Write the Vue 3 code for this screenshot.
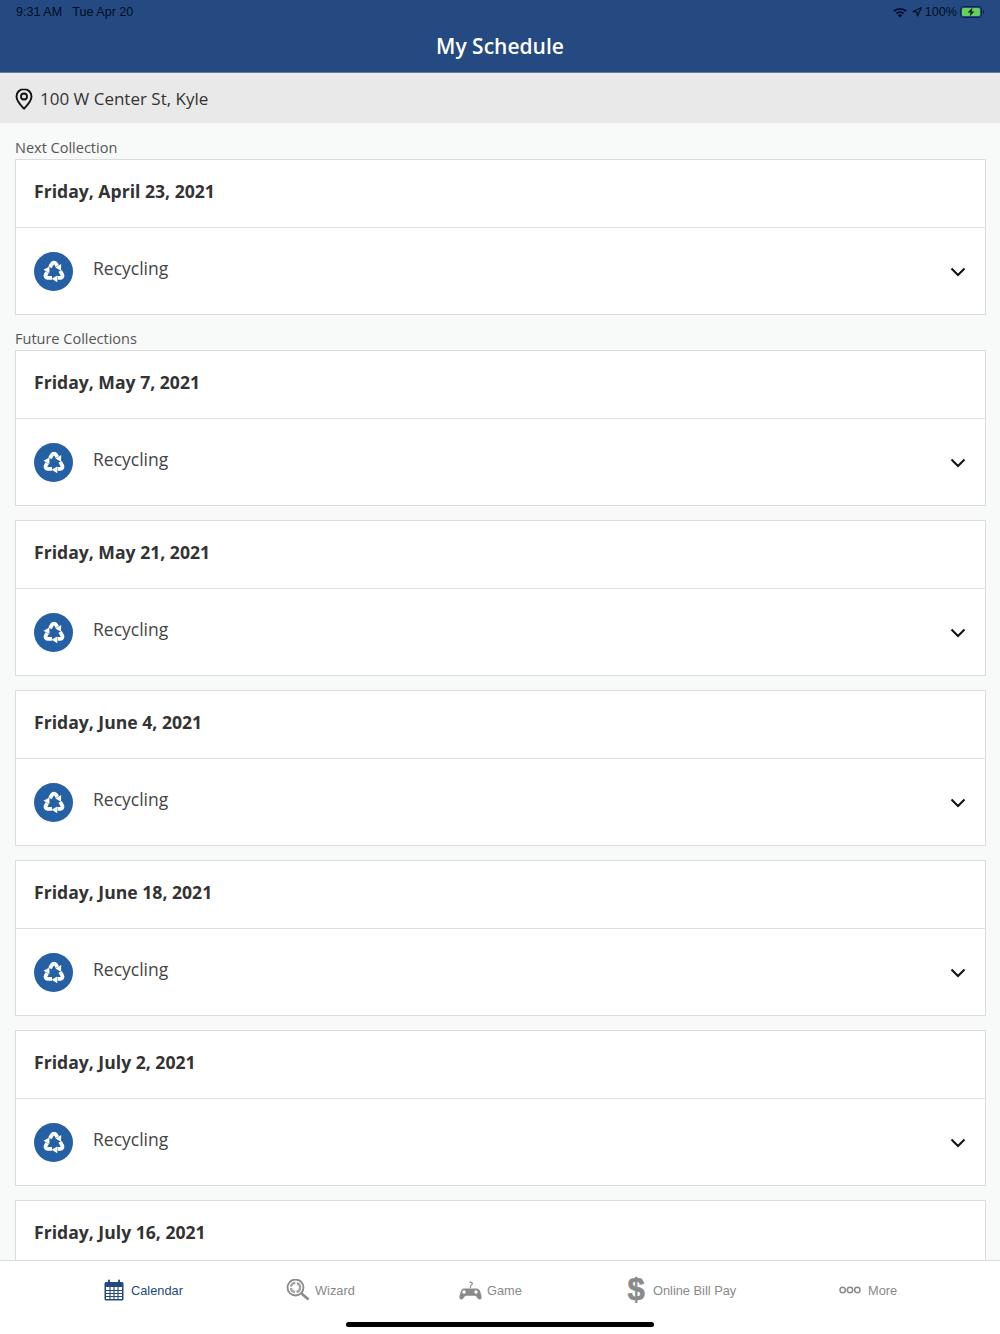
<template>
  <div class="screen">
    <header class="topbar">
      <div class="status">
        <span class="status-left"><span>9:31 AM</span><span>Tue Apr 20</span></span>
        <span class="status-right">
          <svg class="wifi" width="14" height="11" viewBox="0 0 14 11">
            <path d="M.3 3.6a9.600 9.600 0 0 1 13.400 0l-1.200 1.400a7.800 7.800 0 0 0-11 0z" fill="#000c24"/>
            <path d="M2.700 6a6.200 6.200 0 0 1 8.600 0l-1.200 1.300a4.400 4.400 0 0 0-6.200 0z" fill="#000c24"/>
            <path d="M4.900 8.200a3 3 0 0 1 4.200 0L7 10.500z" fill="#000c24"/>
          </svg>
          <svg width="10" height="10" viewBox="0 0 10 10">
            <path d="M9.300.7 1 4.500l3.800.6.700 3.900z" fill="none" stroke="#000c24" stroke-width="1.200" stroke-linejoin="round"/>
          </svg>
          <span>100%</span>
          <svg width="25" height="12" viewBox="0 0 25 12">
            <rect x=".5" y=".5" width="21" height="11" rx="3" fill="none" stroke="#000c24" stroke-opacity=".6"/>
            <rect x="2" y="2" width="18" height="8" rx="1.500" fill="#62d15f"/>
            <path d="M12.500 1.500 7.800 6.600h3l-1.200 4 4.800-5.200h-3z" fill="#000c24"/>
            <path d="M23 4v4c.8-.3 1.200-1 1.200-2s-.4-1.700-1.200-2z" fill="#000c24" fill-opacity=".6"/>
          </svg>
        </span>
      </div>
      <h1>My Schedule</h1>
    </header>

    <div class="address">
      <svg width="18" height="22" viewBox="0 0 18 22">
        <path d="M9 1.100C4.700 1.100 1.500 4.400 1.500 8.500c0 4.800 4.700 9.300 7.500 12.200 2.800-2.900 7.500-7.400 7.500-12.200 0-4.100-3.200-7.400-7.500-7.400z" fill="none" stroke="#111" stroke-width="1.900" stroke-linejoin="round"/>
        <circle cx="9" cy="8.500" r="3" fill="none" stroke="#111" stroke-width="1.800"/>
      </svg>
      <span>100 W Center St, Kyle</span>
    </div>

    <main class="content">
      <template v-for="group in groups" :key="group.title">
        <h2 class="group-title">{{ group.title }}</h2>
        <section v-for="item in group.dates" :key="item.date" class="card">
          <div class="card-date">{{ item.date }}</div>
          <!-- last card is under the tab bar, its row never shows -->
          <div v-if="!item.cut" class="card-row">
            <span class="badge">
              <svg width="24" height="24" viewBox="0 0 24 24">
                <g v-for="deg in [0, 120, 240]" :key="deg" :transform="`rotate(${deg} 12 13)`">
                  <path d="M7.900 8.300 10.200 4.500c.8-1.300 2.800-1.300 3.600 0l1.500 2.500" fill="none" stroke="#fff" stroke-width="3.800"/>
                  <path d="M19.200 5 13.400 8.500l5.600 3.300z" fill="#fff"/>
                </g>
              </svg>
            </span>
            <span class="card-type">Recycling</span>
            <svg class="chevron" width="16" height="10" viewBox="0 0 16 10">
              <path d="M1.500 1.500 8 8l6.500-6.500" fill="none" stroke="#111" stroke-width="2"/>
            </svg>
          </div>
        </section>
      </template>
    </main>

    <nav class="tabbar">
      <div class="tabs">
        <a class="tab active">
          <svg width="20" height="22" viewBox="0 0 20 22">
            <rect x=".5" y="3" width="19" height="18.500" rx="1.500" fill="#24497f"/>
            <rect x="4" y="0.500" width="2" height="5" rx="1" fill="#24497f"/>
            <rect x="14" y="0.500" width="2" height="5" rx="1" fill="#24497f"/>
            <path d="M2 8h16v12H2z" fill="#fff"/>
            <path d="M2 11.500h16M2 14.500h16M2 17.500h16M6 8v12M10 8v12M14 8v12" stroke="#24497f" stroke-width="1.100"/>
          </svg>
          <span>Calendar</span>
        </a>
        <a class="tab tight">
          <svg width="24" height="22" viewBox="0 0 24 22">
            <circle cx="9.500" cy="8.500" r="8" fill="none" stroke="#8a8a8a" stroke-width="1.800"/>
            <circle cx="9.500" cy="8.500" r="4.600" fill="none" stroke="#a5a5a5" stroke-width="2.400" stroke-dasharray="6 1.500"/>
            <path d="M15.500 14.500l7 6" stroke="#8a8a8a" stroke-width="2.600"/>
          </svg>
          <span>Wizard</span>
        </a>
        <a class="tab tight">
          <svg width="24" height="22" viewBox="0 0 24 22">
            <path d="M12.500 9V7.200c0-1 1.800-1.200 1.800-2.600 0-1.200-1.500-1.600-2.800-1.400" fill="none" stroke="#8a8a8a" stroke-width="1.200"/>
            <path d="M5.500 9.500h13c2 0 3.200 1.300 3.800 3.300l1.200 4.200c.5 2-.3 3.500-1.800 3.500-1.300 0-2-.9-3-2.500-.6-.9-1-1.300-2-1.300H8.300c-1 0-1.400.4-2 1.300-1 1.600-1.700 2.500-3 2.500-1.500 0-2.300-1.500-1.800-3.500l1.200-4.200c.6-2 1.800-3.300 2.800-3.300z" fill="#8a8a8a"/>
            <circle cx="6" cy="13" r="1.700" fill="#fff"/>
            <circle cx="18" cy="13" r="1.700" fill="#fff"/>
          </svg>
          <span>Game</span>
        </a>
        <a class="tab">
          <span class="dollar">$</span>
          <span>Online Bill Pay</span>
        </a>
        <a class="tab">
          <svg width="22" height="8" viewBox="0 0 22 8">
            <circle cx="3.700" cy="4" r="2.700" fill="none" stroke="#8a8a8a" stroke-width="1.500"/>
            <circle cx="11" cy="4" r="2.700" fill="none" stroke="#8a8a8a" stroke-width="1.500"/>
            <circle cx="18.300" cy="4" r="2.700" fill="none" stroke="#8a8a8a" stroke-width="1.500"/>
          </svg>
          <span>More</span>
        </a>
      </div>
      <div class="home-bar"></div>
    </nav>
  </div>
</template>

<script setup>
const groups = [
  { title: "Next Collection", dates: [{ date: "Friday, April 23, 2021" }] },
  {
    title: "Future Collections",
    dates: [
      { date: "Friday, May 7, 2021" },
      { date: "Friday, May 21, 2021" },
      { date: "Friday, June 4, 2021" },
      { date: "Friday, June 18, 2021" },
      { date: "Friday, July 2, 2021" },
      { date: "Friday, July 16, 2021", cut: true },
    ],
  },
];
</script>

<style>
html, body {
  margin: 0;
  background: #f8f9f9;
}
</style>

<style scoped>
.screen {
  width: 1000px;
  height: 1334px;
  display: flex;
  flex-direction: column;
  overflow: hidden;
  font-family: "Open Sans", "Noto Sans", sans-serif;
  background: #f8f9f9;
}

.topbar {
  height: 73px;
  box-sizing: border-box;
  flex: none;
  background: #254a82;
  border-bottom: 1px solid #5f7ba3;
}
.status {
  height: 24px;
  padding: 0 15px 0 16px;
  display: flex;
  justify-content: space-between;
  align-items: center;
  font-family: "Liberation Sans", Arial, sans-serif;
  font-size: 12.600px;
  color: #000c24;
}
.status-left {
  display: flex;
  gap: 10px;
}
.status-right {
  display: flex;
  align-items: center;
  gap: 3px;
}
.wifi {
  margin-right: 2px;
}
.topbar h1 {
  margin: 7px 0 0;
  text-align: center;
  font-size: 21px;
  line-height: 30px;
  font-weight: 600;
  color: #fff;
}

.address {
  height: 50px;
  box-sizing: border-box;
  padding: 1px 0 0 15px;
  flex: none;
  display: flex;
  align-items: center;
  gap: 7px;
  background: #e9e9e9;
  font-size: 17px;
  color: #333;
}

.content {
  flex: 1;
  min-height: 0;
  overflow: hidden;
  padding: 13px 14px 0 15px;
}
.group-title {
  margin: 0;
  height: 23px;
  font-size: 14.500px;
  line-height: 24px;
  font-weight: 400;
  color: #555;
}
.card {
  background: #fff;
  border: 1px solid #dcdcdc;
  margin-bottom: 14px;
}
.card:has(+ .group-title) {
  margin-bottom: 12px;
}
.card-date {
  height: 67px;
  padding-left: 18px;
  border-bottom: 1px solid #e0e0e0;
  font-size: 17.600px;
  line-height: 62px;
  font-weight: 700;
  color: #333;
}
.card-row {
  height: 86px;
  display: flex;
  align-items: center;
  padding: 0 19px 0 18px;
}
.badge {
  width: 39px;
  height: 39px;
  border-radius: 50%;
  background: #2560a4;
  display: flex;
  align-items: center;
  justify-content: center;
}
.card-type {
  margin-left: 20px;
  margin-top: -6px;
  font-size: 17.500px;
  color: #444;
}
.chevron {
  margin-left: auto;
  margin-top: 2px;
}

.tabbar {
  height: 74px;
  flex: none;
  box-sizing: border-box;
  background: #fff;
  border-top: 1px solid #d8d8d8;
}
.tabs {
  display: grid;
  grid-template-columns: 182px 172px 168px 213px auto;
  padding: 17px 0 0 104px;
  height: 24px;
  font-family: "Liberation Sans", Arial, sans-serif;
  font-size: 12.800px;
  color: #8a8a8a;
}
.tab {
  display: flex;
  align-items: center;
  gap: 7px;
  height: 24px;
}
.tab.tight {
  gap: 5px;
}
.tab.active {
  color: #24497f;
}
.dollar {
  font-size: 31px;
  line-height: 24px;
  font-weight: 700;
  color: #8a8a8a;
  width: 20px;
  text-align: center;
  -webkit-text-stroke: 0.6px #8a8a8a;
}
.home-bar {
  width: 308px;
  height: 5px;
  margin: 20px auto 0;
  border-radius: 3px;
  background: #000;
}
</style>
